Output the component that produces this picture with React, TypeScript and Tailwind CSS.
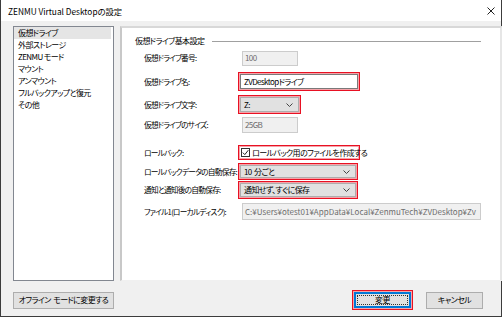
const navItems = [
  '仮想ドライブ',
  '外部ストレージ',
  'ZENMU モード',
  'マウント',
  'アンマウント',
  'フルバックアップと復元',
  'その他',
];

const Chevron = () => (
  <svg width="7" height="4" viewBox="0 0 7 4" className="shrink-0">
    <path d="M0.5 0.5 L3.5 3.5 L6.5 0.5" fill="none" stroke="#444" strokeWidth="1" />
  </svg>
);

const RedBox = ({ className, children }: { className: string; children: React.ReactNode }) => (
  <div className={`flex border border-[#e81123] p-px shadow-[inset_0_0_0_1px_#f6a3a9] ${className}`}>
    {children}
  </div>
);

const Select = ({ value }: { value: string }) => (
  <div className="flex flex-1 items-center justify-between border border-[#adadad] bg-[#e1e1e1] pl-[3px] pr-[5px]">
    <span className="whitespace-pre">{value}</span>
    <Chevron />
  </div>
);

const Row = ({ label, className, children }: { label: string; className: string; children: React.ReactNode }) => (
  <div className={`flex items-center ${className}`}>
    <span className="w-[116px] shrink-0 whitespace-nowrap pl-[22px] text-[7.7px] tracking-[-0.75px]">{label}</span>
    {children}
  </div>
);

const Disabled = ({ value, className }: { value: string; className: string }) => (
  <div className={`ml-[4px] flex items-center overflow-hidden whitespace-nowrap border border-[#cccccc] bg-[#f0f0f0] pl-[2px] text-[#6d6d6d] ${className}`}>
    {value}
  </div>
);

export default function App() {
  return (
    <div className="flex h-[317px] w-[502px] flex-col border-x border-b border-[#3c3c3c] bg-[#f0f0f0] font-['Noto_Sans_CJK_JP','Liberation_Sans',sans-serif] text-[8px] leading-[12px] tracking-[-0.6px] text-black [font-feature-settings:'palt']">
      {/* title bar */}
      <div className="flex h-[21px] shrink-0 items-center justify-between bg-white pl-[7px] pr-[6px] text-[8.3px] tracking-normal">
        <span>ZENMU Virtual Desktopの設定</span>
        <svg width="8" height="8" viewBox="0 0 8 8">
          <path d="M0.5 0.5 L7.5 7.5 M7.5 0.5 L0.5 7.5" stroke="#222" strokeWidth="1" />
        </svg>
      </div>

      <div className="flex flex-1 flex-col pl-[12px] pr-[7px] pt-[5px]">
        <div className="flex h-[255px] gap-[6px]">
          <div className="w-[101px] shrink-0 border border-[#828790] bg-white">
            {navItems.map((item, i) => (
              <div
                key={item}
                className={`mr-[2px] h-[12px] whitespace-nowrap pl-[4px] ${i === 0 ? 'bg-[#e5e5e5]' : ''}`}
              >
                {item}
              </div>
            ))}
          </div>

          <div className="flex flex-1 flex-col border-l-2 border-t-2 border-r-[4px] border-b border-l-[#c8c8c8] border-t-[#d8d8d8] border-r-[#e6e6e6] border-b-[#f0f0f0] bg-white pr-[19px] pt-[7px]">
            <div className="flex h-[12px] items-center pl-[13px]">
              <span className="whitespace-nowrap">仮想ドライブ基本設定</span>
              <div className="ml-[8px] h-px flex-1 bg-[#a0a0a0]" />
            </div>

            <Row label="仮想ドライブ番号:" className="mt-[2px] h-[18px]">
              <Disabled value="100" className="h-[15px] w-[56px]" />
            </Row>

            <Row label="仮想ドライブ名:" className="mt-[5px] h-[19px]">
              <RedBox className="h-[19px] w-[122px]">
                <div className="flex flex-1 items-center border border-[#7a7a7a] bg-white pl-[3px]">
                  ZVDesktopドライブ
                </div>
              </RedBox>
            </Row>

            <Row label="仮想ドライブ文字:" className="mt-[4px] h-[19px]">
              <RedBox className="h-[19px] w-[63px]">
                <Select value="Z:" />
              </RedBox>
            </Row>

            <Row label="仮想ドライブのサイズ:" className="mt-[3px] h-[16px]">
              <Disabled value="25GB" className="h-[16px] w-[56px]" />
            </Row>

            <Row label="ロールバック:" className="mt-[12px] h-[15px]">
              <RedBox className="h-[15px] w-[122px] items-center">
                <div className="ml-[1px] flex h-[9px] w-[9px] shrink-0 items-center justify-center border border-[#333] bg-white">
                  <svg width="7" height="7" viewBox="0 0 7 7">
                    <path d="M0.8 3.6 L2.8 5.6 L6.3 1.2" fill="none" stroke="#222" strokeWidth="1" />
                  </svg>
                </div>
                <span className="ml-[2px] whitespace-nowrap">ロールバック用のファイルを作成する</span>
              </RedBox>
            </Row>

            <Row label="ロールバックデータの自動保存:" className="mt-[3px] h-[17px]">
              <RedBox className="h-[17px] w-[120px]">
                <Select value="10  分ごと" />
              </RedBox>
            </Row>

            <Row label="通知と通知後の自動保存:" className="mt-[1px] h-[18px]">
              <RedBox className="h-[18px] w-[120px]">
                <Select value="通知せず、すぐに保存" />
              </RedBox>
            </Row>

            <Row label="ファイル1(ローカルディスク):" className="mt-[4px] h-[17px]">
              <Disabled
                value="C:¥Users¥otest01¥AppData¥Local¥ZenmuTech¥ZVDesktop¥Zv"
                className="h-[17px] w-[239px] tracking-normal"
              />
            </Row>
          </div>
        </div>

        <div className="mt-[9px] flex items-center justify-between">
          <button
            type="button"
            className="flex h-[17px] w-[101px] items-center justify-center whitespace-pre border border-[#adadad] bg-[#e1e1e1]"
          >
            オフライン  モードに変更する
          </button>
          <div className="mr-[11px] flex items-center gap-[13px]">
            <RedBox className="h-[20px] w-[61px]">
              <div className="flex flex-1 border-2 border-[#0078d7] bg-[#e1e1e1] p-px">
                <div className="flex flex-1 items-center justify-center border border-dotted border-[#333]">
                  変更
                </div>
              </div>
            </RedBox>
            <button
              type="button"
              className="flex h-[17px] w-[57px] items-center justify-center border border-[#adadad] bg-[#e1e1e1]"
            >
              キャンセル
            </button>
          </div>
        </div>
      </div>
    </div>
  );
}
